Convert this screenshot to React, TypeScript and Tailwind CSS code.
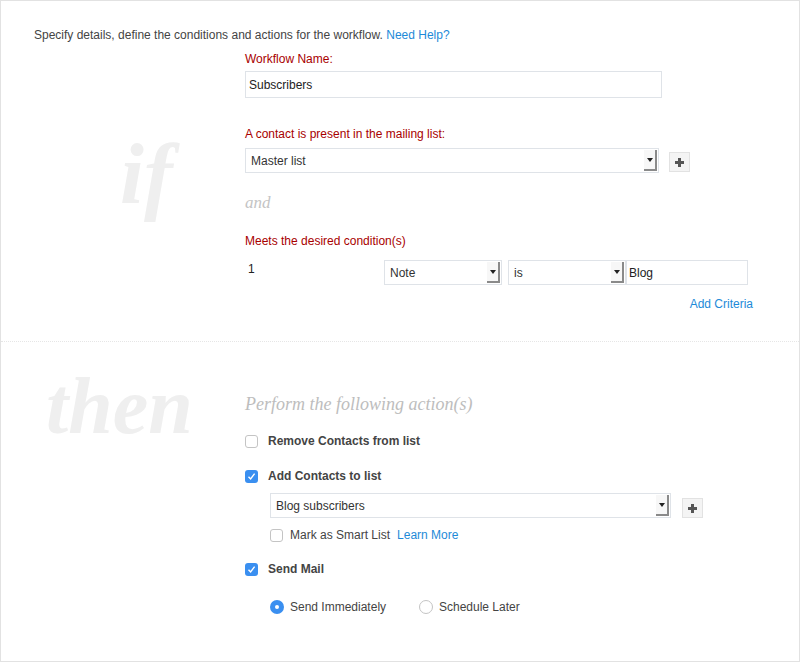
const sans = "font-['Helvetica_Neue','Liberation_Sans',Arial,sans-serif]";
const serif = "font-['Liberation_Serif','Times_New_Roman',serif]";

const SelectBox = ({ value, width }: { value: string; width: string }) => (
  <div
    className={`${width} h-[25px] flex items-stretch border border-[#dfe3e8] bg-white`}
  >
    <div className="flex-1 flex items-center pl-[5px] text-[12px] text-[#333]">
      {value}
    </div>
    <div className="w-[13px] my-[1px] mr-[1px] flex items-center justify-center bg-[#f7f7f7] border-r-2 border-b-2 border-[#8a8a8a]">
      <div className="w-0 h-0 border-l-[3px] border-r-[3px] border-t-[4px] border-l-transparent border-r-transparent border-t-[#222]" />
    </div>
  </div>
);

const PlusButton = () => (
  <div className="w-[21px] h-[20px] flex items-center justify-center border border-[#e2e2e2] bg-[#f4f4f4]">
    <svg width="9" height="9" viewBox="0 0 9 9">
      <rect x="3" y="0" width="3" height="9" fill="#555" />
      <rect x="0" y="3" width="9" height="3" fill="#555" />
    </svg>
  </div>
);

const Checkbox = ({ checked }: { checked?: boolean }) =>
  checked ? (
    <div className="w-[13px] h-[13px] rounded-[3px] bg-[#3a8ff0] flex items-center justify-center">
      <svg width="9" height="9" viewBox="0 0 9 9">
        <path d="M1.5 4.8 L3.6 7 L7.6 1.6" stroke="#fff" strokeWidth="1.4" fill="none" />
      </svg>
    </div>
  ) : (
    <div className="w-[13px] h-[13px] rounded-[3px] border border-[#c4c4c4] bg-white" />
  );

const Radio = ({ checked }: { checked?: boolean }) =>
  checked ? (
    <div className="w-[14px] h-[14px] rounded-full bg-[#3a8ff0] flex items-center justify-center">
      <div className="w-[4px] h-[4px] rounded-full bg-white" />
    </div>
  ) : (
    <div className="w-[14px] h-[14px] rounded-full border border-[#c4c4c4] bg-white" />
  );

export default function App() {
  return (
    <div className={`${sans} w-[800px] h-[663px] bg-white`}>
      <div className="w-[800px] h-[662px] border border-[#e2e2e2] flex flex-col">
        {/* if section */}
        <div className="h-[341px] border-b border-dotted border-[#e6e6e6] pl-[33px] pt-[26px]">
          <p className="text-[12px] leading-[16px] text-[#444]">
            Specify details, define the conditions and actions for the workflow.{" "}
            <span className="text-[#1d8ad8]">Need Help?</span>
          </p>
          <div className="flex mt-2">
            <div className="w-[211px] shrink-0 pl-[86px] pt-[80px]">
              <span className={`${serif} italic font-bold text-[86px] leading-none text-[#efefef]`}>
                if
              </span>
            </div>
            <div className="flex flex-col">
              <p className="text-[12px] leading-[16px] text-[#a80000]">Workflow Name:</p>
              <div className="mt-[4px] w-[417px] h-[27px] border border-[#dfe3e8] flex items-center pl-[3px] text-[12px] text-[#222]">
                Subscribers
              </div>
              <p className="mt-[28px] text-[12px] leading-[16px] text-[#a80000]">
                A contact is present in the mailing list:
              </p>
              <div className="mt-[6px] flex items-start gap-[10px]">
                <SelectBox value="Master list" width="w-[414px]" />
                <div className="mt-[4px]">
                  <PlusButton />
                </div>
              </div>
              <p className={`${serif} italic mt-[20px] text-[17px] leading-[20px] text-[#c4c4c4]`}>and</p>
              <p className="mt-5 text-[12px] leading-[16px] text-[#a80000]">
                Meets the desired condition(s)
              </p>
              <div className="mt-[11px] flex items-start">
                <div className="w-[139px] pl-[3px] pt-[1px] text-[12px] leading-[16px] text-[#222]">1</div>
                <SelectBox value="Note" width="w-[118px]" />
                <div className="ml-[6px]">
                  <SelectBox value="is" width="w-[118px]" />
                </div>
                <div className="w-[122px] h-[25px] border border-[#dfe3e8] flex items-center pl-[2px] text-[12px] text-[#222]">
                  Blog
                </div>
              </div>
              <div className="mt-[11px] w-[508px] text-right text-[12px] leading-[16px] text-[#1d8ad8]">
                Add Criteria
              </div>
            </div>
          </div>
        </div>

        {/* then section */}
        <div className="flex-1 flex pl-[45px] pt-[24px]">
          <div className="w-[199px] shrink-0">
            <span className={`${serif} italic font-bold text-[80px] leading-none text-[#efefef]`}>
              then
            </span>
          </div>
          <div className="flex flex-col pt-[27px]">
            <p className={`${serif} italic text-[18px] leading-[22px] text-[#bdbdbd]`}>
              Perform the following action(s)
            </p>
            <div className="mt-[18px] flex items-center gap-[10px]">
              <Checkbox />
              <span className="text-[12px] leading-[16px] font-bold text-[#444]">
                Remove Contacts from list
              </span>
            </div>
            <div className="mt-[19px] flex items-center gap-[10px]">
              <Checkbox checked />
              <span className="text-[12px] leading-[16px] font-bold text-[#444]">
                Add Contacts to list
              </span>
            </div>
            <div className="mt-[9px] ml-[25px] flex items-start gap-[11px]">
              <SelectBox value="Blog subscribers" width="w-[401px]" />
              <div className="mt-[5px]">
                <PlusButton />
              </div>
            </div>
            <div className="mt-[9px] ml-[25px] flex items-center">
              <Checkbox />
              <span className="ml-[7px] text-[12px] leading-[16px] text-[#444]">Mark as Smart List</span>
              <span className="ml-[7px] text-[12px] leading-[16px] text-[#1d8ad8]">Learn More</span>
            </div>
            <div className="mt-[18px] flex items-center gap-[10px]">
              <Checkbox checked />
              <span className="text-[12px] leading-[16px] font-bold text-[#444]">Send Mail</span>
            </div>
            <div className="mt-[22px] ml-[25px] flex items-center">
              <Radio checked />
              <span className="ml-[6px] w-[129px] text-[12px] leading-[16px] text-[#444]">
                Send Immediately
              </span>
              <Radio />
              <span className="ml-[6px] text-[12px] leading-[16px] text-[#444]">Schedule Later</span>
            </div>
          </div>
        </div>
      </div>
    </div>
  );
}
